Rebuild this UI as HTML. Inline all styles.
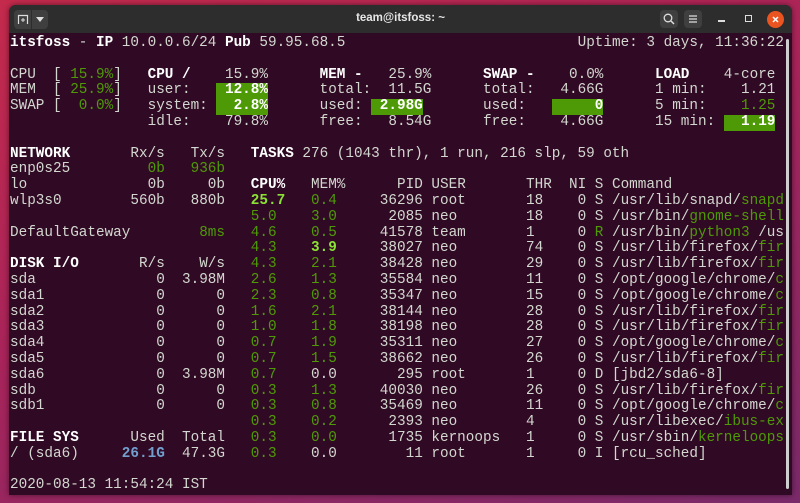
<!DOCTYPE html>
<html><head><meta charset="utf-8"><style>
*{margin:0;padding:0;box-sizing:border-box}
html,body{width:800px;height:503px;overflow:hidden}
body{background:linear-gradient(160deg,#c42a4c 0%,#a8245a 45%,#7a2a6a 100%);position:relative;font-family:"Liberation Mono",monospace}
.win{position:absolute;left:9px;top:5px;width:783px;height:490px;background:#300a24;border-radius:7px 7px 0 0;overflow:hidden;box-shadow:0 0 6px rgba(0,0,0,.5)}
.tb{position:absolute;left:0;top:0;width:100%;height:28px;background:#2d2d2d}
.title{position:absolute;left:0;width:100%;top:7px;text-align:center;color:#e6e6e6;font:bold 11.5px "Liberation Sans",sans-serif}
.btn{position:absolute;background:#3f3f3f;border-radius:4px}
.t{position:absolute;left:0;top:31px;width:100%;height:462px;font-size:14.33px;line-height:15.8px;color:#d3d7cf}
.r{position:absolute;left:1px;height:15.8px;width:780px}
.r span{position:absolute;left:calc(var(--c)*8.6px);white-space:pre}
.b{font-weight:bold;color:#fff}
.g{color:#4e9a06}
.bg{color:#8ae234;font-weight:bold}
.bar{background:#4e9a06;color:#fff;font-weight:bold}
.bl{color:#729fcf;font-weight:bold}
.sb{position:absolute;right:3px;top:34px;width:3px;height:450px;background:#cfcfcf;border-radius:2px}
</style></head><body>
<div class="win">
 <div class="tb">
  <div class="btn" style="left:5px;top:5px;width:34px;height:19px"></div>
  <div style="position:absolute;left:22px;top:5px;width:1px;height:19px;background:#2d2d2d"></div>
  <svg style="position:absolute;left:8px;top:8px" width="12" height="12" viewBox="0 0 12 12"><path d="M1.5 11V2.5h9V11" fill="none" stroke="#ddd" stroke-width="1.2"/><path d="M6 5v4M4 7h4" stroke="#ddd" stroke-width="1"/></svg>
  <svg style="position:absolute;left:27px;top:12px" width="8" height="5"><path d="M0 0h8L4 5z" fill="#ddd"/></svg>
  <div class="title">team@itsfoss: ~</div>
  <div class="btn" style="left:651px;top:5px;width:18px;height:18px"></div>
  <svg style="position:absolute;left:654px;top:8px" width="12" height="12"><circle cx="5" cy="5" r="3.8" fill="none" stroke="#ddd" stroke-width="1.3"/><path d="M8 8l3 3" stroke="#ddd" stroke-width="1.5"/></svg>
  <div class="btn" style="left:675px;top:5px;width:18px;height:18px"></div>
  <svg style="position:absolute;left:679px;top:9px" width="10" height="10"><path d="M1 2h8M1 5h8M1 8h8" stroke="#ddd" stroke-width="1.2"/></svg>
  <div style="position:absolute;left:709px;top:15px;width:7px;height:1.5px;background:#ddd"></div>
  <div style="position:absolute;left:736px;top:10px;width:7px;height:7px;border:1.3px solid #ddd"></div>
  <div style="position:absolute;left:758px;top:6px;width:17px;height:17px;border-radius:50%;background:#e95420"></div>
  <svg style="position:absolute;left:762px;top:10px" width="9" height="9"><path d="M2 2l5 5M7 2l-5 5" stroke="#fff" stroke-width="1.5"/></svg>
 </div>
 <div class="t">
  <div class="r" style="top:0px"><span style="--c:0"><b class="b">itsfoss</b> - <b class="b">IP</b> 10.0.0.6/24 <b class="b">Pub</b> 59.95.68.5</span><span style="--c:66">Uptime: 3 days, 11:36:22</span></div>
  <div class="r" style="top:31.6px"><span style="--c:0">CPU  [<i class="g" style="font-style:normal"> 15.9%</i>]</span><span class="b" style="--c:16">CPU /</span><span style="--c:25">15.9%</span><span class="b" style="--c:36">MEM -</span><span style="--c:44">25.9%</span><span class="b" style="--c:55">SWAP -</span><span style="--c:65">0.0%</span><span class="b" style="--c:75">LOAD</span><span style="--c:83">4-core</span></div>
  <div class="r" style="top:47.4px"><span style="--c:0">MEM  [<i class="g" style="font-style:normal"> 25.9%</i>]</span><span style="--c:16">user:</span><span class="bar" style="--c:24"> 12.8%</span><span style="--c:36">total:</span><span style="--c:44">11.5G</span><span style="--c:55">total:</span><span style="--c:64">4.66G</span><span style="--c:75">1 min:</span><span style="--c:85">1.21</span></div>
  <div class="r" style="top:63.2px"><span style="--c:0">SWAP [<i class="g" style="font-style:normal">  0.0%</i>]</span><span style="--c:16">system:</span><span class="bar" style="--c:24">  2.8%</span><span style="--c:36">used:</span><span class="bar" style="--c:42"> 2.98G</span><span style="--c:55">used:</span><span class="bar" style="--c:63">     0</span><span style="--c:75">5 min:</span><span class="g" style="--c:85">1.25</span></div>
  <div class="r" style="top:79px"><span style="--c:16">idle:</span><span style="--c:25">79.8%</span><span style="--c:36">free:</span><span style="--c:44">8.54G</span><span style="--c:55">free:</span><span style="--c:64">4.66G</span><span style="--c:75">15 min:</span><span class="bar" style="--c:83">  1.19</span></div>

  <div class="r" style="top:110.6px"><span class="b" style="--c:0">NETWORK</span><span style="--c:14">Rx/s</span><span style="--c:21">Tx/s</span><span style="--c:28"><b class="b">TASKS</b> 276 (1043 thr), 1 run, 216 slp, 59 oth</span></div>
  <div class="r" style="top:126.4px"><span style="--c:0">enp0s25</span><span class="g" style="--c:16">0b</span><span class="g" style="--c:21">936b</span></div>
  <div class="r" style="top:142.2px"><span style="--c:0">lo</span><span style="--c:16">0b</span><span style="--c:23">0b</span><span class="b" style="--c:28">CPU%</span><span style="--c:35">MEM%</span><span style="--c:45">PID USER</span><span style="--c:60">THR  NI S Command</span></div>
  <div class="r" style="top:158px"><span style="--c:0">wlp3s0</span><span style="--c:14">560b</span><span style="--c:21">880b</span><span class="bg" style="--c:28">25.7</span><span class="g" style="--c:35">0.4</span><span style="--c:43">36296 root</span><span style="--c:60">18</span><span style="--c:66">0 S /usr/lib/snapd/<i class="g" style="font-style:normal">snapd</i></span></div>
  <div class="r" style="top:173.8px"><span class="g" style="--c:28">5.0</span><span class="g" style="--c:35">3.0</span><span style="--c:43"> 2085 neo</span><span style="--c:60">18</span><span style="--c:66">0 S /usr/bin/<i class="g" style="font-style:normal">gnome-shell</i></span></div>
  <div class="r" style="top:189.6px"><span style="--c:0">DefaultGateway</span><span class="g" style="--c:22">8ms</span><span class="g" style="--c:28">4.6</span><span class="g" style="--c:35">0.5</span><span style="--c:43">41578 team</span><span style="--c:60">1</span><span style="--c:66">0 <i class="g" style="font-style:normal">R</i> /usr/bin/<i class="g" style="font-style:normal">python3</i> /us</span></div>
  <div class="r" style="top:205.4px"><span class="g" style="--c:28">4.3</span><span class="bg" style="--c:35">3.9</span><span style="--c:43">38027 neo</span><span style="--c:60">74</span><span style="--c:66">0 S /usr/lib/firefox/<i class="g" style="font-style:normal">fir</i></span></div>
  <div class="r" style="top:221.2px"><span class="b" style="--c:0">DISK I/O</span><span style="--c:15">R/s</span><span style="--c:22">W/s</span><span class="g" style="--c:28">4.3</span><span class="g" style="--c:35">2.1</span><span style="--c:43">38428 neo</span><span style="--c:60">29</span><span style="--c:66">0 S /usr/lib/firefox/<i class="g" style="font-style:normal">fir</i></span></div>
  <div class="r" style="top:237px"><span style="--c:0">sda</span><span style="--c:17">0</span><span style="--c:20">3.98M</span><span class="g" style="--c:28">2.6</span><span class="g" style="--c:35">1.3</span><span style="--c:43">35584 neo</span><span style="--c:60">11</span><span style="--c:66">0 S /opt/google/chrome/<i class="g" style="font-style:normal">c</i></span></div>
  <div class="r" style="top:252.8px"><span style="--c:0">sda1</span><span style="--c:17">0</span><span style="--c:24">0</span><span class="g" style="--c:28">2.3</span><span class="g" style="--c:35">0.8</span><span style="--c:43">35347 neo</span><span style="--c:60">15</span><span style="--c:66">0 S /opt/google/chrome/<i class="g" style="font-style:normal">c</i></span></div>
  <div class="r" style="top:268.6px"><span style="--c:0">sda2</span><span style="--c:17">0</span><span style="--c:24">0</span><span class="g" style="--c:28">1.6</span><span class="g" style="--c:35">2.1</span><span style="--c:43">38144 neo</span><span style="--c:60">28</span><span style="--c:66">0 S /usr/lib/firefox/<i class="g" style="font-style:normal">fir</i></span></div>
  <div class="r" style="top:284.4px"><span style="--c:0">sda3</span><span style="--c:17">0</span><span style="--c:24">0</span><span class="g" style="--c:28">1.0</span><span class="g" style="--c:35">1.8</span><span style="--c:43">38198 neo</span><span style="--c:60">28</span><span style="--c:66">0 S /usr/lib/firefox/<i class="g" style="font-style:normal">fir</i></span></div>
  <div class="r" style="top:300.2px"><span style="--c:0">sda4</span><span style="--c:17">0</span><span style="--c:24">0</span><span class="g" style="--c:28">0.7</span><span class="g" style="--c:35">1.9</span><span style="--c:43">35311 neo</span><span style="--c:60">27</span><span style="--c:66">0 S /opt/google/chrome/<i class="g" style="font-style:normal">c</i></span></div>
  <div class="r" style="top:316px"><span style="--c:0">sda5</span><span style="--c:17">0</span><span style="--c:24">0</span><span class="g" style="--c:28">0.7</span><span class="g" style="--c:35">1.5</span><span style="--c:43">38662 neo</span><span style="--c:60">26</span><span style="--c:66">0 S /usr/lib/firefox/<i class="g" style="font-style:normal">fir</i></span></div>
  <div class="r" style="top:331.8px"><span style="--c:0">sda6</span><span style="--c:17">0</span><span style="--c:20">3.98M</span><span class="g" style="--c:28">0.7</span><span style="--c:35">0.0</span><span style="--c:43">  295 root</span><span style="--c:60">1</span><span style="--c:66">0 D [jbd2/sda6-8]</span></div>
  <div class="r" style="top:347.6px"><span style="--c:0">sdb</span><span style="--c:17">0</span><span style="--c:24">0</span><span class="g" style="--c:28">0.3</span><span class="g" style="--c:35">1.3</span><span style="--c:43">40030 neo</span><span style="--c:60">26</span><span style="--c:66">0 S /usr/lib/firefox/<i class="g" style="font-style:normal">fir</i></span></div>
  <div class="r" style="top:363.4px"><span style="--c:0">sdb1</span><span style="--c:17">0</span><span style="--c:24">0</span><span class="g" style="--c:28">0.3</span><span class="g" style="--c:35">0.8</span><span style="--c:43">35469 neo</span><span style="--c:60">11</span><span style="--c:66">0 S /opt/google/chrome/<i class="g" style="font-style:normal">c</i></span></div>
  <div class="r" style="top:379.2px"><span class="g" style="--c:28">0.3</span><span class="g" style="--c:35">0.2</span><span style="--c:43"> 2393 neo</span><span style="--c:60">4</span><span style="--c:66">0 S /usr/libexec/<i class="g" style="font-style:normal">ibus-ex</i></span></div>
  <div class="r" style="top:395px"><span class="b" style="--c:0">FILE SYS</span><span style="--c:14">Used</span><span style="--c:20">Total</span><span class="g" style="--c:28">0.3</span><span class="g" style="--c:35">0.0</span><span style="--c:43"> 1735 kernoops</span><span style="--c:60">1</span><span style="--c:66">0 S /usr/sbin/<i class="g" style="font-style:normal">kerneloops</i></span></div>
  <div class="r" style="top:410.8px"><span style="--c:0">/ (sda6)</span><span class="bl" style="--c:13">26.1G</span><span style="--c:20">47.3G</span><span class="g" style="--c:28">0.3</span><span style="--c:35">0.0</span><span style="--c:43">   11 root</span><span style="--c:60">1</span><span style="--c:66">0 I [rcu_sched]</span></div>
  <div class="r" style="top:442.4px"><span style="--c:0">2020-08-13 11:54:24 IST</span></div>
 </div>
 <div class="sb"></div>
</div>
</body></html>
